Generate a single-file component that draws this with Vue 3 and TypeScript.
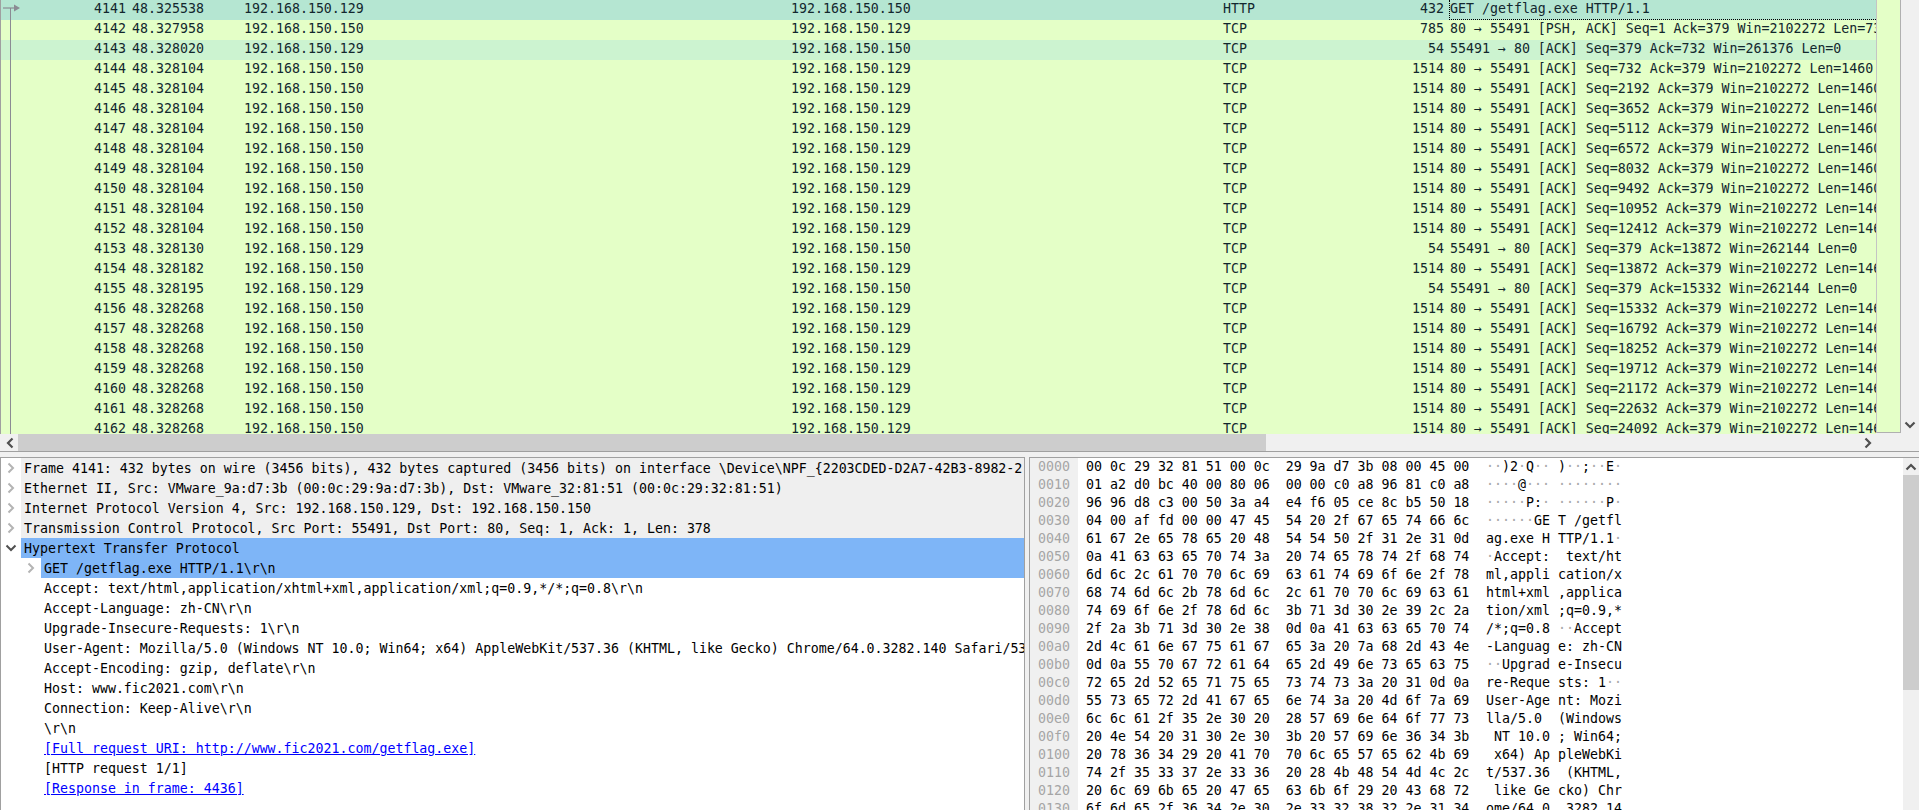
<script setup lang="ts">
interface Pkt { no: number; time: string; src: string; dst: string; proto: string; len: number; info: string; kind: string }
const C = '192.168.150.129'
const S = '192.168.150.150'
const dn = (seq: number) => `80 → 55491 [ACK] Seq=${seq} Ack=379 Win=2102272 Len=1460`
const up = (ack: number, win: number) => `55491 → 80 [ACK] Seq=379 Ack=${ack} Win=${win} Len=0`
const raw: [string, string, string, number, string, string?][] = [
  ['48.325538', C, 'HTTP', 432, 'GET /getflag.exe HTTP/1.1', 'sel'],
  ['48.327958', S, 'TCP', 785, '80 → 55491 [PSH, ACK] Seq=1 Ack=379 Win=2102272 Len=731'],
  ['48.328020', C, 'TCP', 54, up(732, 261376), 'ack'],
  ['48.328104', S, 'TCP', 1514, dn(732)],
  ['48.328104', S, 'TCP', 1514, dn(2192)],
  ['48.328104', S, 'TCP', 1514, dn(3652)],
  ['48.328104', S, 'TCP', 1514, dn(5112)],
  ['48.328104', S, 'TCP', 1514, dn(6572)],
  ['48.328104', S, 'TCP', 1514, dn(8032)],
  ['48.328104', S, 'TCP', 1514, dn(9492)],
  ['48.328104', S, 'TCP', 1514, dn(10952)],
  ['48.328104', S, 'TCP', 1514, dn(12412)],
  ['48.328130', C, 'TCP', 54, up(13872, 262144)],
  ['48.328182', S, 'TCP', 1514, dn(13872)],
  ['48.328195', C, 'TCP', 54, up(15332, 262144)],
  ['48.328268', S, 'TCP', 1514, dn(15332)],
  ['48.328268', S, 'TCP', 1514, dn(16792)],
  ['48.328268', S, 'TCP', 1514, dn(18252)],
  ['48.328268', S, 'TCP', 1514, dn(19712)],
  ['48.328268', S, 'TCP', 1514, dn(21172)],
  ['48.328268', S, 'TCP', 1514, dn(22632)],
  ['48.328268', S, 'TCP', 1514, dn(24092)],
]
const packets: Pkt[] = raw.map((r, i) => ({
  no: 4141 + i,
  time: r[0],
  src: r[1],
  dst: r[1] === C ? S : C,
  proto: r[2],
  len: r[3],
  info: r[4],
  kind: r[5] ?? '',
}))

const tree = [
  { t: 'Frame 4141: 432 bytes on wire (3456 bits), 432 bytes captured (3456 bits) on interface \\Device\\NPF_{2203CDED-D2A7-42B3-8982-2', c: 'closed', l: 0 },
  { t: 'Ethernet II, Src: VMware_9a:d7:3b (00:0c:29:9a:d7:3b), Dst: VMware_32:81:51 (00:0c:29:32:81:51)', c: 'closed', l: 0 },
  { t: 'Internet Protocol Version 4, Src: 192.168.150.129, Dst: 192.168.150.150', c: 'closed', l: 0 },
  { t: 'Transmission Control Protocol, Src Port: 55491, Dst Port: 80, Seq: 1, Ack: 1, Len: 378', c: 'closed', l: 0 },
  { t: 'Hypertext Transfer Protocol', c: 'open', l: 0, sel: true },
  { t: 'GET /getflag.exe HTTP/1.1\\r\\n', c: 'closed', l: 1, sel: true },
  { t: 'Accept: text/html,application/xhtml+xml,application/xml;q=0.9,*/*;q=0.8\\r\\n', c: '', l: 1 },
  { t: 'Accept-Language: zh-CN\\r\\n', c: '', l: 1 },
  { t: 'Upgrade-Insecure-Requests: 1\\r\\n', c: '', l: 1 },
  { t: 'User-Agent: Mozilla/5.0 (Windows NT 10.0; Win64; x64) AppleWebKit/537.36 (KHTML, like Gecko) Chrome/64.0.3282.140 Safari/53', c: '', l: 1 },
  { t: 'Accept-Encoding: gzip, deflate\\r\\n', c: '', l: 1 },
  { t: 'Host: www.fic2021.com\\r\\n', c: '', l: 1 },
  { t: 'Connection: Keep-Alive\\r\\n', c: '', l: 1 },
  { t: '\\r\\n', c: '', l: 1 },
  { t: '[Full request URI: http://www.fic2021.com/getflag.exe]', c: '', l: 1, link: true },
  { t: '[HTTP request 1/1]', c: '', l: 1 },
  { t: '[Response in frame: 4436]', c: '', l: 1, link: true },
]

const hexLines = [
  '00 0c 29 32 81 51 00 0c 29 9a d7 3b 08 00 45 00',
  '01 a2 d0 bc 40 00 80 06 00 00 c0 a8 96 81 c0 a8',
  '96 96 d8 c3 00 50 3a a4 e4 f6 05 ce 8c b5 50 18',
  '04 00 af fd 00 00 47 45 54 20 2f 67 65 74 66 6c',
  '61 67 2e 65 78 65 20 48 54 54 50 2f 31 2e 31 0d',
  '0a 41 63 63 65 70 74 3a 20 74 65 78 74 2f 68 74',
  '6d 6c 2c 61 70 70 6c 69 63 61 74 69 6f 6e 2f 78',
  '68 74 6d 6c 2b 78 6d 6c 2c 61 70 70 6c 69 63 61',
  '74 69 6f 6e 2f 78 6d 6c 3b 71 3d 30 2e 39 2c 2a',
  '2f 2a 3b 71 3d 30 2e 38 0d 0a 41 63 63 65 70 74',
  '2d 4c 61 6e 67 75 61 67 65 3a 20 7a 68 2d 43 4e',
  '0d 0a 55 70 67 72 61 64 65 2d 49 6e 73 65 63 75',
  '72 65 2d 52 65 71 75 65 73 74 73 3a 20 31 0d 0a',
  '55 73 65 72 2d 41 67 65 6e 74 3a 20 4d 6f 7a 69',
  '6c 6c 61 2f 35 2e 30 20 28 57 69 6e 64 6f 77 73',
  '20 4e 54 20 31 30 2e 30 3b 20 57 69 6e 36 34 3b',
  '20 78 36 34 29 20 41 70 70 6c 65 57 65 62 4b 69',
  '74 2f 35 33 37 2e 33 36 20 28 4b 48 54 4d 4c 2c',
  '20 6c 69 6b 65 20 47 65 63 6b 6f 29 20 43 68 72',
  '6f 6d 65 2f 36 34 2e 30 2e 33 32 38 32 2e 31 34',
]
const dump = hexLines.map((line, i) => {
  const bytes = line.split(' ')
  const cell = (b: string) => {
    const v = parseInt(b, 16)
    const p = v >= 32 && v < 127
    return { ch: p ? String.fromCharCode(v) : '·', dim: !p }
  }
  return {
    off: (i * 16).toString(16).padStart(4, '0'),
    hex: bytes.slice(0, 8).join(' ') + '  ' + bytes.slice(8).join(' '),
    left: bytes.slice(0, 8).map(cell),
    right: bytes.slice(8).map(cell),
  }
})
</script>

<template>
  <div class="app">
    <section class="packets">
      <div class="list">
        <div class="rel-line"></div>
        <svg class="rel-arrow" width="18" height="10" viewBox="0 0 18 10">
          <path d="M0 5H12" stroke="#8b8b93" stroke-width="1.2" fill="none" />
          <path d="M11 1.5L17 5L11 8.5Z" fill="#8b8b93" />
        </svg>
        <div v-for="p in packets" :key="p.no" class="row" :class="p.kind">
          <span class="no">{{ p.no }}</span>
          <span>{{ p.time }}</span>
          <span>{{ p.src }}</span>
          <span>{{ p.dst }}</span>
          <span>{{ p.proto }}</span>
          <span class="len">{{ p.len }}</span>
          <span class="info">{{ p.info }}</span>
        </div>
      </div>
      <div class="minimap"></div>
      <div class="pk-vscroll">
        <svg class="arrow" width="12" height="8" viewBox="0 0 12 8"><path d="M1.5 1.5L6 6L10.5 1.5" /></svg>
      </div>
    </section>

    <div class="hscroll">
      <span class="hbtn"><svg class="arrow" width="8" height="12" viewBox="0 0 8 12"><path d="M6.5 1.5L2 6L6.5 10.5" /></svg></span>
      <span class="hthumb"></span>
      <span class="hspace"></span>
      <span class="hbtn"><svg class="arrow" width="8" height="12" viewBox="0 0 8 12"><path d="M1.5 1.5L6 6L1.5 10.5" /></svg></span>
    </div>

    <div class="split">
      <section class="details">
        <div v-for="(n, i) in tree" :key="i" class="node" :class="{ nested: n.l === 1 }">
          <span class="tw">
            <svg v-if="n.c === 'closed'" width="8" height="12" viewBox="0 0 8 12"><path d="M1.5 1.5L6 6L1.5 10.5" /></svg>
            <svg v-else-if="n.c === 'open'" class="open" width="12" height="8" viewBox="0 0 12 8"><path d="M1.5 1.5L6 6L10.5 1.5" /></svg>
          </span>
          <span class="label" :class="{ sel: n.sel, link: n.link }"><span :class="{ under: n.link }">{{ n.t }}</span></span>
        </div>
      </section>

      <section class="bytes">
        <div class="dump">
          <div v-for="d in dump" :key="d.off" class="dline">
            <span class="off">{{ d.off }}</span>
            <span class="hex">{{ d.hex }}</span>
            <span class="ascii"><span v-for="(c, i) in d.left" :key="i" :class="{ dim: c.dim }">{{ c.ch }}</span> <span v-for="(c, i) in d.right" :key="'r' + i" :class="{ dim: c.dim }">{{ c.ch }}</span></span>
          </div>
        </div>
        <div class="by-vscroll">
          <span class="vbtn"><svg class="arrow" width="12" height="8" viewBox="0 0 12 8"><path d="M1.5 6.5L6 2L10.5 6.5" /></svg></span>
          <span class="vthumb"></span>
        </div>
      </section>
    </div>
  </div>
</template>

<style>
html, body { margin: 0; overflow: hidden; background: #f0f0f0; }
</style>

<style scoped>
.app {
  width: 1919px;
  height: 810px;
  display: flex;
  flex-direction: column;
  overflow: hidden;
  background: #f0f0f0;
  color: #000;
  font-family: "DejaVu Sans Mono", "Liberation Mono", monospace;
  font-size: 13.28px;
  white-space: pre;
}
svg { display: block; }
.arrow path, .tw path { fill: none; stroke-width: 2; }
.arrow path { stroke: #505050; stroke-width: 2.2; }
.tw path { stroke: #b4b4b4; }
.tw .open path { stroke: #505050; }

.packets {
  height: 434px;
  flex: none;
  display: flex;
  border-left: 1px solid #a0a0a0;
  box-sizing: border-box;
  overflow: hidden;
}
.list { position: relative; width: 1875px; flex: none; overflow: hidden; }
.rel-line { position: absolute; left: 9px; top: 8px; bottom: 0; width: 1px; background: #8b8b93; z-index: 1; }
.rel-arrow { position: absolute; left: 2px; top: 3px; z-index: 1; }
.row {
  display: grid;
  grid-template-columns: 131px 112px 547px 432px 100px 126px 427px;
  height: 20px;
  line-height: 18px;
  background: #e4ffc7;
  color: #12272e;
  overflow: hidden;
}
.row:first-of-type { margin-top: -2px; }
.row.sel { background: #b5e6d2; }
.row.ack { background: #ccf3d0; }
.no { text-align: right; padding-right: 6px; }
.len { text-align: right; padding-right: 5px; }
.info { overflow: hidden; border-left: 1px solid transparent; }
.row.sel .info { border-left: 1px dotted #000; border-bottom: 1px dotted #000; box-sizing: border-box; height: 20px; }
.minimap {
  width: 25px;
  flex: none;
  box-sizing: border-box;
  background: #e4ffc7;
  border-left: 1px solid #c4c4c4;
  border-right: 1px solid #b0b0b0;
  border-bottom: 1px solid #b0b0b0;
  margin-bottom: 1px;
}
.pk-vscroll {
  flex: 1;
  display: flex;
  flex-direction: column;
  justify-content: flex-end;
  align-items: center;
  padding-bottom: 5px;
}

.hscroll {
  height: 17px;
  width: 1876px;
  flex: none;
  display: flex;
  padding-left: 1px;
  box-sizing: border-box;
}
.hbtn { width: 17px; flex: none; display: flex; align-items: center; justify-content: center; }
.hthumb { width: 1248px; flex: none; background: #cdcdcd; }
.hspace { flex: 1; }

.split {
  flex: 1;
  min-height: 0;
  display: flex;
  align-items: stretch;
  border-top: 1px solid #a0a0a0;
  padding-top: 5px;
}
.details {
  width: 1025px;
  flex: none;
  box-sizing: border-box;
  background: #fff;
  border: 1px solid #a0a0a0;
  border-bottom: 0;
  overflow: hidden;
}
.node { display: flex; height: 20px; line-height: 21px; }
.tw { width: 20px; flex: none; display: flex; align-items: center; justify-content: center; }
.nested { padding-left: 20px; }
.label { flex: 1; min-width: 0; overflow: hidden; background: transparent; padding-left: 3px; }
.node:nth-child(-n+4) .label { background: #efefef; }
.label.sel { background: #7eb5f7; }
.link { color: #0000ff; }
.under { text-decoration: underline; }

.bytes {
  flex: 1;
  min-width: 0;
  margin-left: 4px;
  display: flex;
  background: #fff;
  border-top: 1px solid #a0a0a0;
  border-left: 1px solid #a0a0a0;
  overflow: hidden;
}
.dump { flex: 1; min-width: 0; overflow: hidden; }
.dline { display: grid; grid-template-columns: 48px 408px 1fr; height: 18px; line-height: 18px; }
.off { background: #f0f0f0; color: #a5a5a5; padding-left: 8px; }
.hex { padding-left: 8px; }
.dim { color: #a8a8a8; }
.by-vscroll { width: 16px; flex: none; background: #f0f0f0; display: flex; flex-direction: column; }
.vbtn { height: 17px; flex: none; display: flex; align-items: center; justify-content: center; }
.vthumb { height: 215px; flex: none; background: #cdcdcd; }
</style>
